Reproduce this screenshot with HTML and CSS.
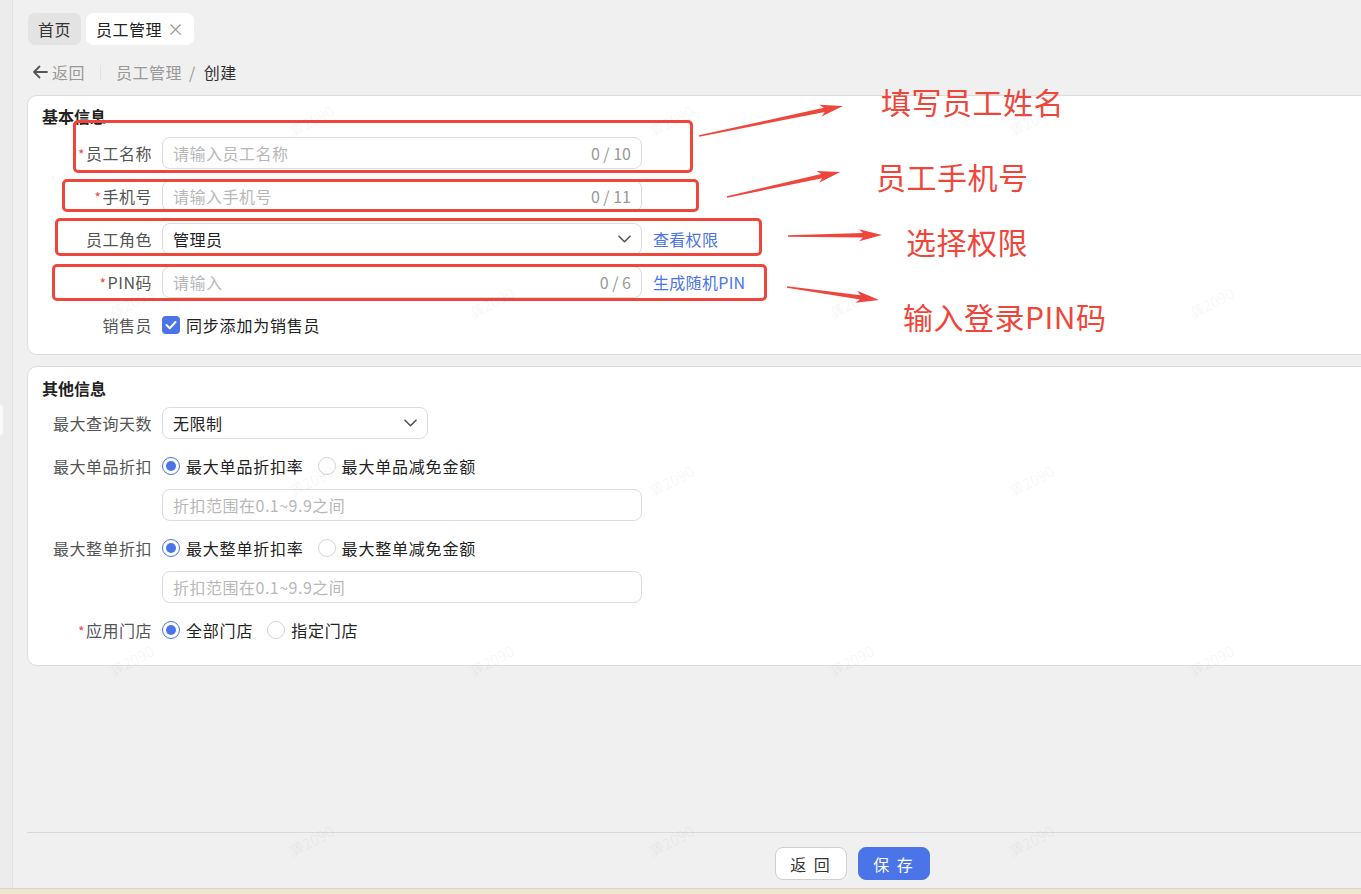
FILE: index.html
```html
<!DOCTYPE html>
<html lang="zh-CN">
<head>
    <meta charset="UTF-8">
    <meta name="viewport" content="width=device-width, initial-scale=1.0">
    <title>员工管理 - 创建</title>
    <link rel="stylesheet" href="styles.css">
</head>
<body>
    <div class="page">
        <aside class="side"><span class="side-handle"></span></aside>
        <main class="main">
            <div class="tabs">
                <span class="tab">首页</span>
                <span class="tab active">员工管理<span class="tab-close">×</span></span>
            </div>

            <div class="crumbs">
                <span class="back">
                    <svg width="16" height="14" viewBox="0 0 16 14"><path d="M15 7H2M7.5 1.5L2 7l5.5 5.5" fill="none" stroke="#555" stroke-width="1.8" stroke-linecap="round" stroke-linejoin="round"/></svg>
                    返回
                </span>
                <span class="crumb-sep"></span>
                <span class="crumb">员工管理</span>
                <span class="crumb-slash">/</span>
                <span class="crumb current">创建</span>
            </div>

            <section class="card card-basic">
                <h3 class="card-title">基本信息</h3>
                <div class="form-item">
                    <label class="label required">员工名称</label>
                    <div class="input-box"><input type="text" placeholder="请输入员工名称"><span class="count">0 / 10</span></div>
                </div>
                <div class="form-item">
                    <label class="label required">手机号</label>
                    <div class="input-box"><input type="text" placeholder="请输入手机号"><span class="count">0 / 11</span></div>
                </div>
                <div class="form-item">
                    <label class="label">员工角色</label>
                    <div class="select wide">
                        <span>管理员</span>
                        <svg width="13" height="8" viewBox="0 0 13 8"><path d="M1 1.2l5.5 5.5L12 1.2" fill="none" stroke="#555" stroke-width="1.6" stroke-linecap="round" stroke-linejoin="round"/></svg>
                    </div>
                    <a class="link">查看权限</a>
                </div>
                <div class="form-item">
                    <label class="label required">PIN码</label>
                    <div class="input-box"><input type="text" placeholder="请输入"><span class="count">0 / 6</span></div>
                    <a class="link">生成随机PIN</a>
                </div>
                <div class="form-item">
                    <label class="label">销售员</label>
                    <span class="checkbox">
                        <svg width="12" height="10" viewBox="0 0 12 10"><path d="M1.5 5l3.2 3.2L10.5 2" fill="none" stroke="#fff" stroke-width="2" stroke-linecap="round" stroke-linejoin="round"/></svg>
                    </span>
                    <span class="option-text">同步添加为销售员</span>
                </div>
            </section>

            <section class="card card-other">
                <h3 class="card-title">其他信息</h3>
                <div class="form-item first">
                    <label class="label">最大查询天数</label>
                    <div class="select narrow">
                        <span>无限制</span>
                        <svg width="13" height="8" viewBox="0 0 13 8"><path d="M1 1.2l5.5 5.5L12 1.2" fill="none" stroke="#555" stroke-width="1.6" stroke-linecap="round" stroke-linejoin="round"/></svg>
                    </div>
                </div>
                <div class="form-item">
                    <label class="label">最大单品折扣</label>
                    <span class="radio checked"></span><span class="option-text">最大单品折扣率</span>
                    <span class="radio"></span><span class="option-text">最大单品减免金额</span>
                </div>
                <div class="form-item sub">
                    <label class="label"></label>
                    <div class="input-box"><input type="text" placeholder="折扣范围在0.1~9.9之间"></div>
                </div>
                <div class="form-item">
                    <label class="label">最大整单折扣</label>
                    <span class="radio checked"></span><span class="option-text">最大整单折扣率</span>
                    <span class="radio"></span><span class="option-text">最大整单减免金额</span>
                </div>
                <div class="form-item sub">
                    <label class="label"></label>
                    <div class="input-box"><input type="text" placeholder="折扣范围在0.1~9.9之间"></div>
                </div>
                <div class="form-item last">
                    <label class="label required">应用门店</label>
                    <span class="radio checked"></span><span class="option-text">全部门店</span>
                    <span class="radio"></span><span class="option-text">指定门店</span>
                </div>
            </section>

            <div class="spacer"></div>

            <footer class="footer">
                <button type="button" class="btn">返 回</button>
                <button type="button" class="btn primary">保 存</button>
            </footer>
        </main>
    </div>
    <div class="bottom-strip"></div>

    <!-- screenshot annotations -->
    <div class="note-box" style="left:73px; top:120px; width:620px; height:53px;"></div>
    <div class="note-box" style="left:62px; top:179px; width:637px; height:33px;"></div>
    <div class="note-box" style="left:55px; top:218px; width:707px; height:38px;"></div>
    <div class="note-box" style="left:52px; top:264px; width:715px; height:37px;"></div>

    <svg class="note-arrows" width="1361" height="894" viewBox="0 0 1361 894">
        <g fill="#ef463b">
            <polygon transform="translate(699 136) rotate(-11.77)" points="0,-0.7 128,-2.2 124,-6 147,0 124,6 128,2.2 0,0.7"/>
            <polygon transform="translate(727 197) rotate(-12.47)" points="0,-0.7 97,-2.2 93,-6 116,0 93,6 97,2.2 0,0.7"/>
            <polygon transform="translate(788 236) rotate(-0.6)" points="0,-0.7 75,-2.2 71,-6 94,0 71,6 75,2.2 0,0.7"/>
            <polygon transform="translate(787 287) rotate(8.04)" points="0,-0.7 74,-2.2 70,-6 93,0 70,6 74,2.2 0,0.7"/>
        </g>
    </svg>

    <span class="note-text" style="left:881px; top:85px;">填写员工姓名</span>
    <span class="note-text" style="left:876px; top:160px;">员工手机号</span>
    <span class="note-text" style="left:906px; top:225px;">选择权限</span>
    <span class="note-text" style="left:903px; top:300px;">输入登录PIN码</span>

    <div class="watermarks">
        <span style="left:287px; top:110px;">龚2090</span>
        <span style="left:647px; top:110px;">龚2090</span>
        <span style="left:1007px; top:110px;">龚2090</span>
        <span style="left:107px; top:292px;">龚2090</span>
        <span style="left:467px; top:292px;">龚2090</span>
        <span style="left:827px; top:292px;">龚2090</span>
        <span style="left:1187px; top:292px;">龚2090</span>
        <span style="left:287px; top:470px;">龚2090</span>
        <span style="left:647px; top:470px;">龚2090</span>
        <span style="left:1007px; top:470px;">龚2090</span>
        <span style="left:107px; top:650px;">龚2090</span>
        <span style="left:467px; top:650px;">龚2090</span>
        <span style="left:827px; top:650px;">龚2090</span>
        <span style="left:1187px; top:650px;">龚2090</span>
        <span style="left:287px; top:830px;">龚2090</span>
        <span style="left:647px; top:830px;">龚2090</span>
        <span style="left:1007px; top:830px;">龚2090</span>
    </div>
</body>
</html>
```

FILE: styles.css
```css
* {
    box-sizing: border-box;
}
html, body {
    margin: 0;
    height: 100%;
}
body {
    font-family: "Noto Sans CJK SC", "Noto Sans", sans-serif;
    font-size: 16px;
    color: #333;
    background: #f0f0f0;
    overflow: hidden;
    display: flex;
    flex-direction: column;
}
.page {
    flex: 1;
    display: flex;
    min-height: 0;
}
.side {
    width: 13px;
    flex-shrink: 0;
    background: #ececec;
    border-right: 1px solid #e0e0e0;
    padding-top: 405px;
}
.side-handle {
    display: block;
    width: 3px;
    height: 30px;
    background: #fafafa;
    border-radius: 0 3px 3px 0;
}
.main {
    width: 1665px;
    flex-shrink: 0;
    padding-left: 14px;
    display: flex;
    flex-direction: column;
}

/* tabs */
.tabs {
    display: flex;
    gap: 5px;
    padding: 13px 0 0 1px;
}
.tab {
    height: 32px;
    line-height: 32px;
    padding: 0 10px;
    border-radius: 7px;
    background: #e3e3e3;
    color: #333;
    letter-spacing: 0.5px;
}
.tab.active {
    background: #fff;
    color: #222;
    padding-right: 9px;
}
.tab-close {
    margin-left: 5px;
    color: #999;
    font-size: 17px;
}

/* breadcrumb */
.crumbs {
    display: flex;
    align-items: center;
    height: 22px;
    margin-top: 16px;
    padding-left: 5px;
    color: #999;
    letter-spacing: 0.5px;
}
.back {
    display: flex;
    align-items: center;
    gap: 4px;
}
.crumb-sep {
    width: 1px;
    height: 15px;
    background: #e2e2e2;
    margin: 0 15px;
}
.crumb-slash {
    margin: 0 8px 0 7px;
    color: #999;
}
.crumb.current {
    color: #333;
}

/* cards */
.card {
    background: #fff;
    border: 1px solid #dcdcdc;
    border-radius: 10px;
    padding: 9px 0 13px 14px;
}
.card-basic {
    margin-top: 12px;
}
.card-other {
    margin-top: 11px;
    padding-top: 10px;
    padding-bottom: 19px;
}
.card-title {
    margin: 0 0 10px;
    font-size: 16px;
    line-height: 22px;
    font-weight: bold;
    color: #222;
}
.card-other .card-title {
    margin-bottom: 8px;
}

/* form rows */
.form-item {
    display: flex;
    align-items: center;
    height: 32px;
    margin-bottom: 11px;
}
.form-item:last-child {
    margin-bottom: 0;
}
.form-item.sub {
    margin-top: -4px;
}
.label {
    width: 110px;
    margin-right: 10px;
    text-align: right;
    color: #555;
    letter-spacing: 0.5px;
    white-space: nowrap;
}
.label.required::before {
    content: "*";
    color: #f04848;
    font-size: 14px;
    margin-right: 1px;
}
.input-box {
    width: 480px;
    height: 32px;
    border: 1px solid #dcdcdc;
    border-radius: 8px;
    display: flex;
    align-items: center;
    padding: 0 10px;
}
.input-box input {
    flex: 1;
    min-width: 0;
    border: none;
    outline: none;
    padding: 0;
    font: inherit;
    color: #333;
    letter-spacing: 0.5px;
    background: transparent;
}
.input-box input::placeholder {
    color: #b8b8b8;
}
.count {
    color: #999;
    white-space: nowrap;
}
.select {
    height: 32px;
    border: 1px solid #dcdcdc;
    border-radius: 8px;
    display: flex;
    align-items: center;
    justify-content: space-between;
    padding: 0 10px;
    color: #222;
    letter-spacing: 0.5px;
}
.select.wide {
    width: 480px;
}
.select.narrow {
    width: 266px;
}
.link {
    margin-left: 11px;
    color: #4a74e8;
    cursor: pointer;
    letter-spacing: 0.3px;
}
.checkbox {
    width: 18px;
    height: 18px;
    border-radius: 4px;
    background: #4a74e8;
    display: flex;
    align-items: center;
    justify-content: center;
    margin-right: 6px;
}
.radio {
    width: 18px;
    height: 18px;
    border-radius: 50%;
    border: 1px solid #d4d4d4;
    background: #fff;
    margin-right: 6px;
    display: flex;
    align-items: center;
    justify-content: center;
}
.radio.checked {
    border-color: #4a74e8;
}
.radio.checked::after {
    content: "";
    width: 10px;
    height: 10px;
    border-radius: 50%;
    background: #4a74e8;
}
.option-text {
    color: #222;
    margin-right: 14px;
    letter-spacing: 0.8px;
}

.spacer {
    flex: 1;
}

/* footer */
.footer {
    height: 56px;
    border-top: 1px solid #d8d8d8;
    padding-top: 14px;
    display: flex;
    justify-content: center;
    gap: 11px;
}
.btn {
    width: 72px;
    height: 33px;
    border-radius: 8px;
    border: 1px solid #cfcfcf;
    background: #fff;
    color: #333;
    font: inherit;
    letter-spacing: 2px;
    cursor: pointer;
}
.btn.primary {
    background: #4a74e8;
    border-color: #4a74e8;
    color: #fff;
}
.bottom-strip {
    height: 6px;
    background: #efe5d2;
    border-top: 1px solid #dcd4c4;
}

/* annotations drawn over the screenshot */
.note-box {
    position: absolute;
    border: 3px solid #ef463b;
    border-radius: 5px;
}
.note-arrows {
    position: absolute;
    left: 0;
    top: 0;
    pointer-events: none;
}
.note-text {
    position: absolute;
    font-size: 30px;
    line-height: 32px;
    color: #ef463b;
    letter-spacing: 0.5px;
    white-space: nowrap;
}

.watermarks span {
    position: absolute;
    font-size: 15px;
    color: rgba(0, 0, 0, 0.05);
    transform: rotate(-28deg);
    pointer-events: none;
}
```
